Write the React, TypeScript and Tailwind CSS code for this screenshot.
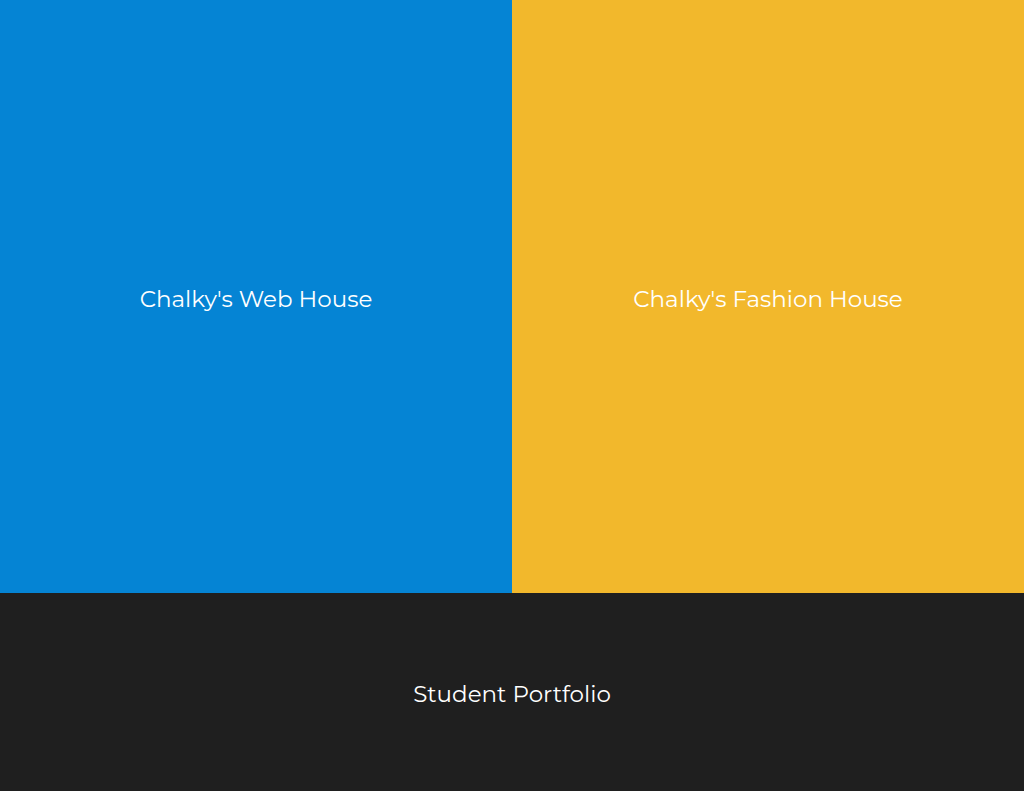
const linkClass =
  "flex items-center justify-center px-4 pt-1 text-center text-[23px] leading-[32px] text-white";

export default function App() {
  return (
    <main className="grid min-h-screen grid-cols-2 grid-rows-[3fr_1fr] bg-[#1f1f1f] font-['Montserrat','Inter',sans-serif]">
      <a href="#web" className={`${linkClass} bg-[#0584d4]`}>
        Chalky's Web House
      </a>
      <a href="#fashion" className={`${linkClass} bg-[#f2b82c]`}>
        Chalky's Fashion House
      </a>
      <a href="#portfolio" className={`${linkClass} col-span-2 bg-[#1f1f1f]`}>
        Student Portfolio
      </a>
    </main>
  );
}
